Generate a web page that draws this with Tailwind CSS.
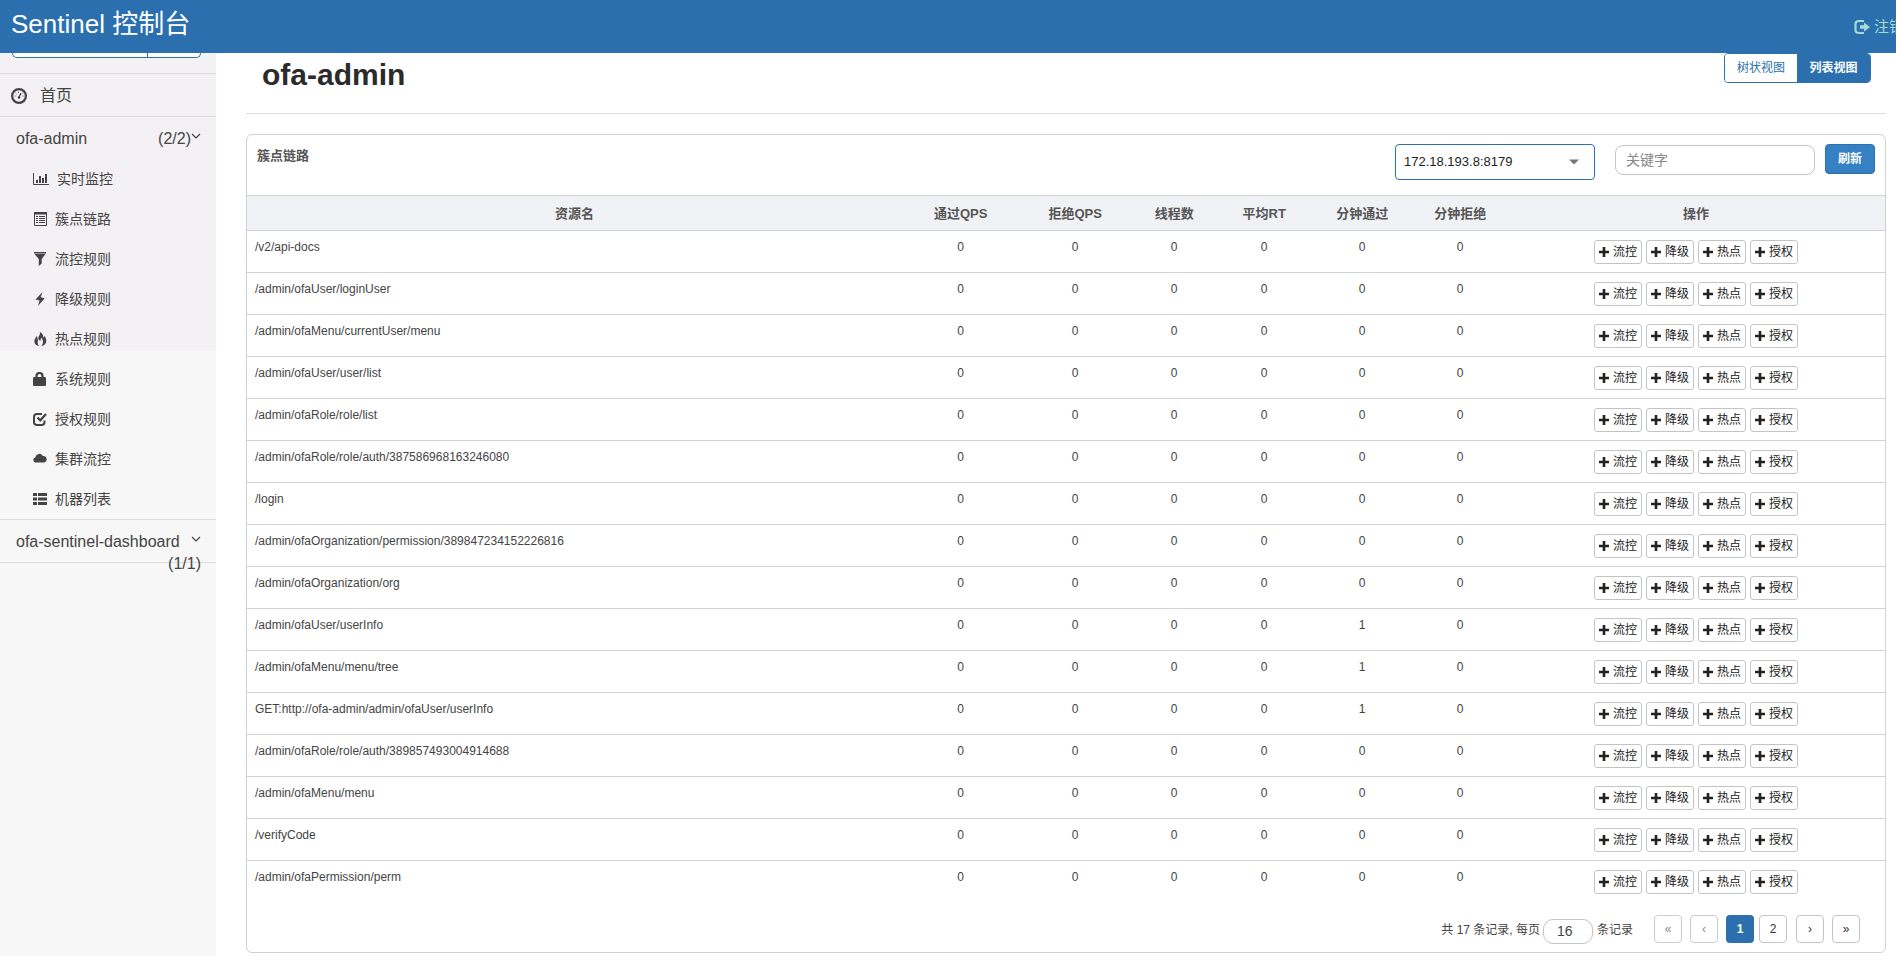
<!DOCTYPE html>
<html lang="zh-CN">
<head>
<meta charset="utf-8">
<title>Sentinel 控制台</title>
<script src="https://cdn.jsdelivr.net/npm/@tailwindcss/browser@4"></script>
</head>
<body class="flex h-screen flex-col overflow-hidden bg-white font-['Liberation_Sans','Noto_Sans_CJK_SC',sans-serif] text-xs text-[#444]">
<header class="flex h-[53px] shrink-0 justify-between overflow-hidden bg-[#2b6fae]">
  <a href="#" class="pl-[11px] pt-1 text-[26px] leading-10 text-white">Sentinel 控制台</a>
  <a href="#" class="-mr-2 flex h-[53px] items-center gap-1 text-[15px] text-[#a3dcd2]">
    <svg class="h-4 w-4" viewBox="0 0 16 16" fill="none" aria-hidden="true"><path d="M10 2H5Q1.500 2 1.500 5v6q0 3 3.500 3h5" stroke="currentColor" stroke-width="2.200"/><path d="M6 6.300h4V3.500L16 8l-6 4.500V9.700H6z" fill="currentColor"/></svg>
    <span class="whitespace-nowrap">注销</span>
  </a>
</header>
<div class="flex min-h-0 flex-1">
  <aside class="w-[216px] shrink-0 bg-[linear-gradient(#f3f1f3_298px,#f7f7f7_298px)]">
    <div class="h-[21px] border-b border-[#dedede] pl-3 pr-[15px]">
      <div class="flex h-[5px] rounded-b-md border border-t-0 border-[#2b6fae] bg-white"><div class="flex-1 border-r border-[#2b6fae]"></div><div class="w-[52px]"></div></div>
    </div>
    <nav>
      <a href="#" class="flex h-[43px] items-center gap-[13px] border-b border-[#dedede] pl-[11px] pt-px text-base">
        <svg class="h-4 w-4" viewBox="0 0 16 16" fill="none" stroke="currentColor" aria-hidden="true"><circle cx="8" cy="8" r="6.900" stroke-width="2.200"/><path d="M8 9.500l1.800-4.300" stroke-width="1.300"/><circle cx="8" cy="9.500" r="1.300" fill="currentColor" stroke="none"/><path d="M3.500 8h1M4.700 5.300l.8.700M7.500 3.600v1M11.500 8h1M10.800 5.800l.7-.6" stroke-width="1"/></svg>
        首页</a>
      <a href="#" class="flex h-[42px] items-center pl-4 pr-[15px] pt-px text-base"><span class="flex-1">ofa-admin</span><span>(2/2)</span>
        <svg class="mb-1.5 h-2.5 w-2.5" viewBox="0 0 10 10" fill="none" stroke="currentColor" aria-hidden="true"><path d="M1 3l4 4 4-4" stroke-width="1.200"/></svg></a>
      <ul id="menu" class="border-b border-[#dedede] text-sm"></ul>
      <a href="#" class="flex h-[43px] justify-between border-b border-[#dedede] pl-4 pr-[15px] pt-[11px] text-base leading-[22px]"><span>ofa-sentinel-dashboard</span>
        <span class="flex flex-col items-end"><svg class="mb-2 mt-1 h-2.5 w-2.5 shrink-0" viewBox="0 0 10 10" fill="none" stroke="currentColor" aria-hidden="true"><path d="M1 2l4 4 4-4" stroke-width="1.200"/></svg><span class="-ml-8">(1/1)</span></span></a>
    </nav>
  </aside>
  <main class="min-w-0 flex-1 pl-[30px] pr-2.5">
    <div class="flex h-[61px] items-start justify-between border-b border-[#ddd] pl-4 pr-[15px]">
      <h1 class="pt-1 text-[30px] font-bold leading-9 text-[#2b2b2b]">ofa-admin</h1>
      <div class="flex h-[30px] overflow-hidden rounded border border-[#2b6fae] text-xs">
        <button type="button" class="w-[72px] bg-white text-[#2b6fae]">树状视图</button>
        <button type="button" class="w-[73px] bg-[#2b6fae] font-bold text-white">列表视图</button>
      </div>
    </div>
    <section class="mt-5 rounded-md border border-[#d0d0d0]">
      <div class="flex h-[60px] items-start pl-2.5 pr-2.5 pt-[9px]">
        <h2 class="flex-1 text-[13px] font-bold leading-6 text-[#555]">簇点链路</h2>
        <div class="relative mr-5 w-[200px]">
          <select aria-label="机器" class="h-9 w-full appearance-none rounded-sm border border-[#2b6fae] bg-white pl-2 text-[13px] text-[#222]"><option>172.18.193.8:8179</option></select>
          <svg class="pointer-events-none absolute right-4 top-[15px] h-[6px] w-2.5" viewBox="0 0 10 6" fill="#777" aria-hidden="true"><path d="M0 .5h10L5 5.500z"/></svg>
        </div>
        <input type="text" aria-label="关键字" placeholder="关键字" class="mr-2.5 mt-px h-[30px] w-[200px] rounded-lg border border-[#c4c4c4] px-2.5 text-sm placeholder:text-[#888]">
        <button type="button" class="h-[30px] w-[50px] rounded border border-[#2b6fae] bg-[#3680c4] text-xs font-bold text-white">刷新</button>
      </div>
      <table class="w-full table-fixed border-collapse">
        <colgroup><col class="w-[40%]"><col class="w-[117px]"><col class="w-[112px]"><col class="w-[86px]"><col class="w-[94px]"><col class="w-[102px]"><col class="w-[94px]"><col></colgroup>
        <thead><tr class="h-[35px] border-y border-[#d2d2d2] bg-[#f1f2f6] text-[13px] text-[#555] [&>th]:pt-0.5"><th>资源名</th><th>通过QPS</th><th>拒绝QPS</th><th>线程数</th><th>平均RT</th><th>分钟通过</th><th>分钟拒绝</th><th>操作</th></tr></thead>
        <tbody id="rows"></tbody>
      </table>
      <div class="flex h-[49px] items-center justify-end pr-[25px] pt-1">
        <label for="size" class="pt-0.5">共 17 条记录, 每页</label>
        <input id="size" type="text" value="16" class="ml-[3px] mr-1 mt-1 h-[25px] w-[50px] rounded-[10px] border border-[#c4c4c4] pl-[13px] text-sm">
        <span class="pt-0.5">条记录</span>
        <div class="ml-[21px] flex gap-2 text-xs text-[#333]">
          <button type="button" disabled aria-label="首页" class="size-7 rounded-sm border border-[#ccc] text-[#888]">«</button>
          <button type="button" disabled aria-label="上一页" class="size-7 rounded-sm border border-[#ccc] text-[#888]">‹</button>
          <div class="mr-px flex gap-[5px]">
            <button type="button" class="size-7 rounded-sm bg-[#2b6fae] font-bold text-white">1</button>
            <button type="button" class="size-7 rounded-sm border border-[#c4c4c4]">2</button>
          </div>
          <button type="button" aria-label="下一页" class="size-7 rounded-sm border border-[#c4c4c4]">›</button>
          <button type="button" aria-label="末页" class="size-7 rounded-sm border border-[#c4c4c4]">»</button>
        </div>
      </div>
    </section>
  </main>
</div>
<script>
const icons = {
  chart: '<path d="M.5 1v11.500H16" fill="none" stroke="currentColor"/><path d="M3 8h2v3H3zM6 4h2v7H6zM9 6h2v5H9zM12 2h2v9h-2z"/>',
  list: '<path d="M1.500.500h12v13h-12z" fill="none" stroke="currentColor"/><path d="M1 0h13v2.500H1zM3 4h2v1H3zM6 4h6v1H6zM3 6h2v1H3zM6 6h6v1H6zM3 8h2v1H3zM6 8h6v1H6zM3 10h2v1H3zM6 10h6v1H6z"/>',
  filter: '<path d="M1 0h12v1.500H1zM1.500 2h11L8.700 7v4.500L5.800 14V7z"/>',
  flash: '<path d="M9.500 0L2.500 7.500l4 1L5 14l6.700-7.800-4-.9z"/>',
  fire: '<path d="M6.800 0c1 2.800-1.500 3.800-1.500 6.300 0 1.500 1.200 2.500 2.200 2.600C7.300 7.500 7.900 6.300 9 5.700c0 1.500 1 2.400 1 4 0 1.700-.6 3-1.600 4.300 3-.4 4.900-2.600 4.900-5.300 0-2-.8-3.200-1.800-4.700-.2.800-.6 1.300-1.200 1.700C10.500 3.500 9.500 1 6.800 0zM3.800 3.500C3.700 5.500 1.300 6.500 1.300 9.300c0 2.700 1.900 4.400 4.700 4.700C5 12.800 4.500 11.500 4.800 9.500c.2-1 .3-1.500-.1-2.600-.3-1-.5-2-.9-3.400z"/>',
  lock: '<path d="M3.500 5.500V4q0-3 3-3t3 3v1.500" fill="none" stroke="currentColor" stroke-width="2.200"/><rect y="5" width="13" height="9" rx="1.200"/>',
  check: '<path d="M9 1.900H4Q1 1.900 1 5v5q0 3 3 3h4.500q3 0 3-3V8.500" fill="none" stroke="currentColor" stroke-width="2"/><path d="M4.500 5.500l2.800 2.800L13 2" fill="none" stroke="currentColor" stroke-width="2.200"/>',
  cloud: '<path d="M2.500 10.500a2.600 2.600 0 0 1-.2-5.100A4 4 0 0 1 9.800 4a3.300 3.300 0 1 1 1.200 6.500z"/>',
  rows: '<path d="M0 1h4v3H0zM5 1h9v3H5zM0 5.500h4v3H0zM5 5.500h9v3H5zM0 10h4v3H0zM5 10h9v3H5z"/>'
};
document.getElementById('menu').innerHTML = [
  ['chart','实时监控'],['list','簇点链路'],['filter','流控规则'],['flash','降级规则'],['fire','热点规则'],
  ['lock','系统规则'],['check','授权规则'],['cloud','集群流控'],['rows','机器列表']
].map(([icon, name]) => {
  const wide = icon === 'chart';
  return `<li><a href="#" class="flex h-10 items-center gap-2 pl-[33px]"><svg class="${wide ? 'h-3.5 w-4' : 'h-3.5 w-3.5'}" viewBox="0 0 ${wide ? 16 : 14} 14" fill="currentColor" aria-hidden="true">${icons[icon]}</svg>${name}</a></li>`;
}).join('');

const plus = '<svg class="size-2.5" viewBox="0 0 10 10" fill="currentColor" aria-hidden="true"><path d="M3.700 0h2.600v3.700H10v2.600H6.300V10H3.700V6.300H0V3.700h3.700z"/></svg>';
document.getElementById('rows').innerHTML = [
  ['/v2/api-docs',0],['/admin/ofaUser/loginUser',0],['/admin/ofaMenu/currentUser/menu',0],['/admin/ofaUser/user/list',0],
  ['/admin/ofaRole/role/list',0],['/admin/ofaRole/role/auth/387586968163246080',0],['/login',0],
  ['/admin/ofaOrganization/permission/389847234152226816',0],['/admin/ofaOrganization/org',0],['/admin/ofaUser/userInfo',1],
  ['/admin/ofaMenu/menu/tree',1],['GET:http://ofa-admin/admin/ofaUser/userInfo',1],['/admin/ofaRole/role/auth/389857493004914688',0],
  ['/admin/ofaMenu/menu',0],['/verifyCode',0],['/admin/ofaPermission/perm',0]
].map(([path, pass]) => `<tr class="h-[42px] border-b border-[#d2d2d2] align-top last:border-b-0">
  <td class="truncate pl-2 pt-2">${path}</td>
  ${[0,0,0,0,pass,0].map(n => `<td class="pt-2 text-center">${n}</td>`).join('')}
  <td class="pt-[9px]"><div class="flex justify-center gap-1">${['流控','降级','热点','授权'].map(a =>
    `<button type="button" class="flex h-6 items-center gap-1 rounded-[3px] border border-[#c4c4c4] px-1 text-[#222]">${plus}${a}</button>`).join('')}</div></td>
</tr>`).join('');
</script>
</body>
</html>
